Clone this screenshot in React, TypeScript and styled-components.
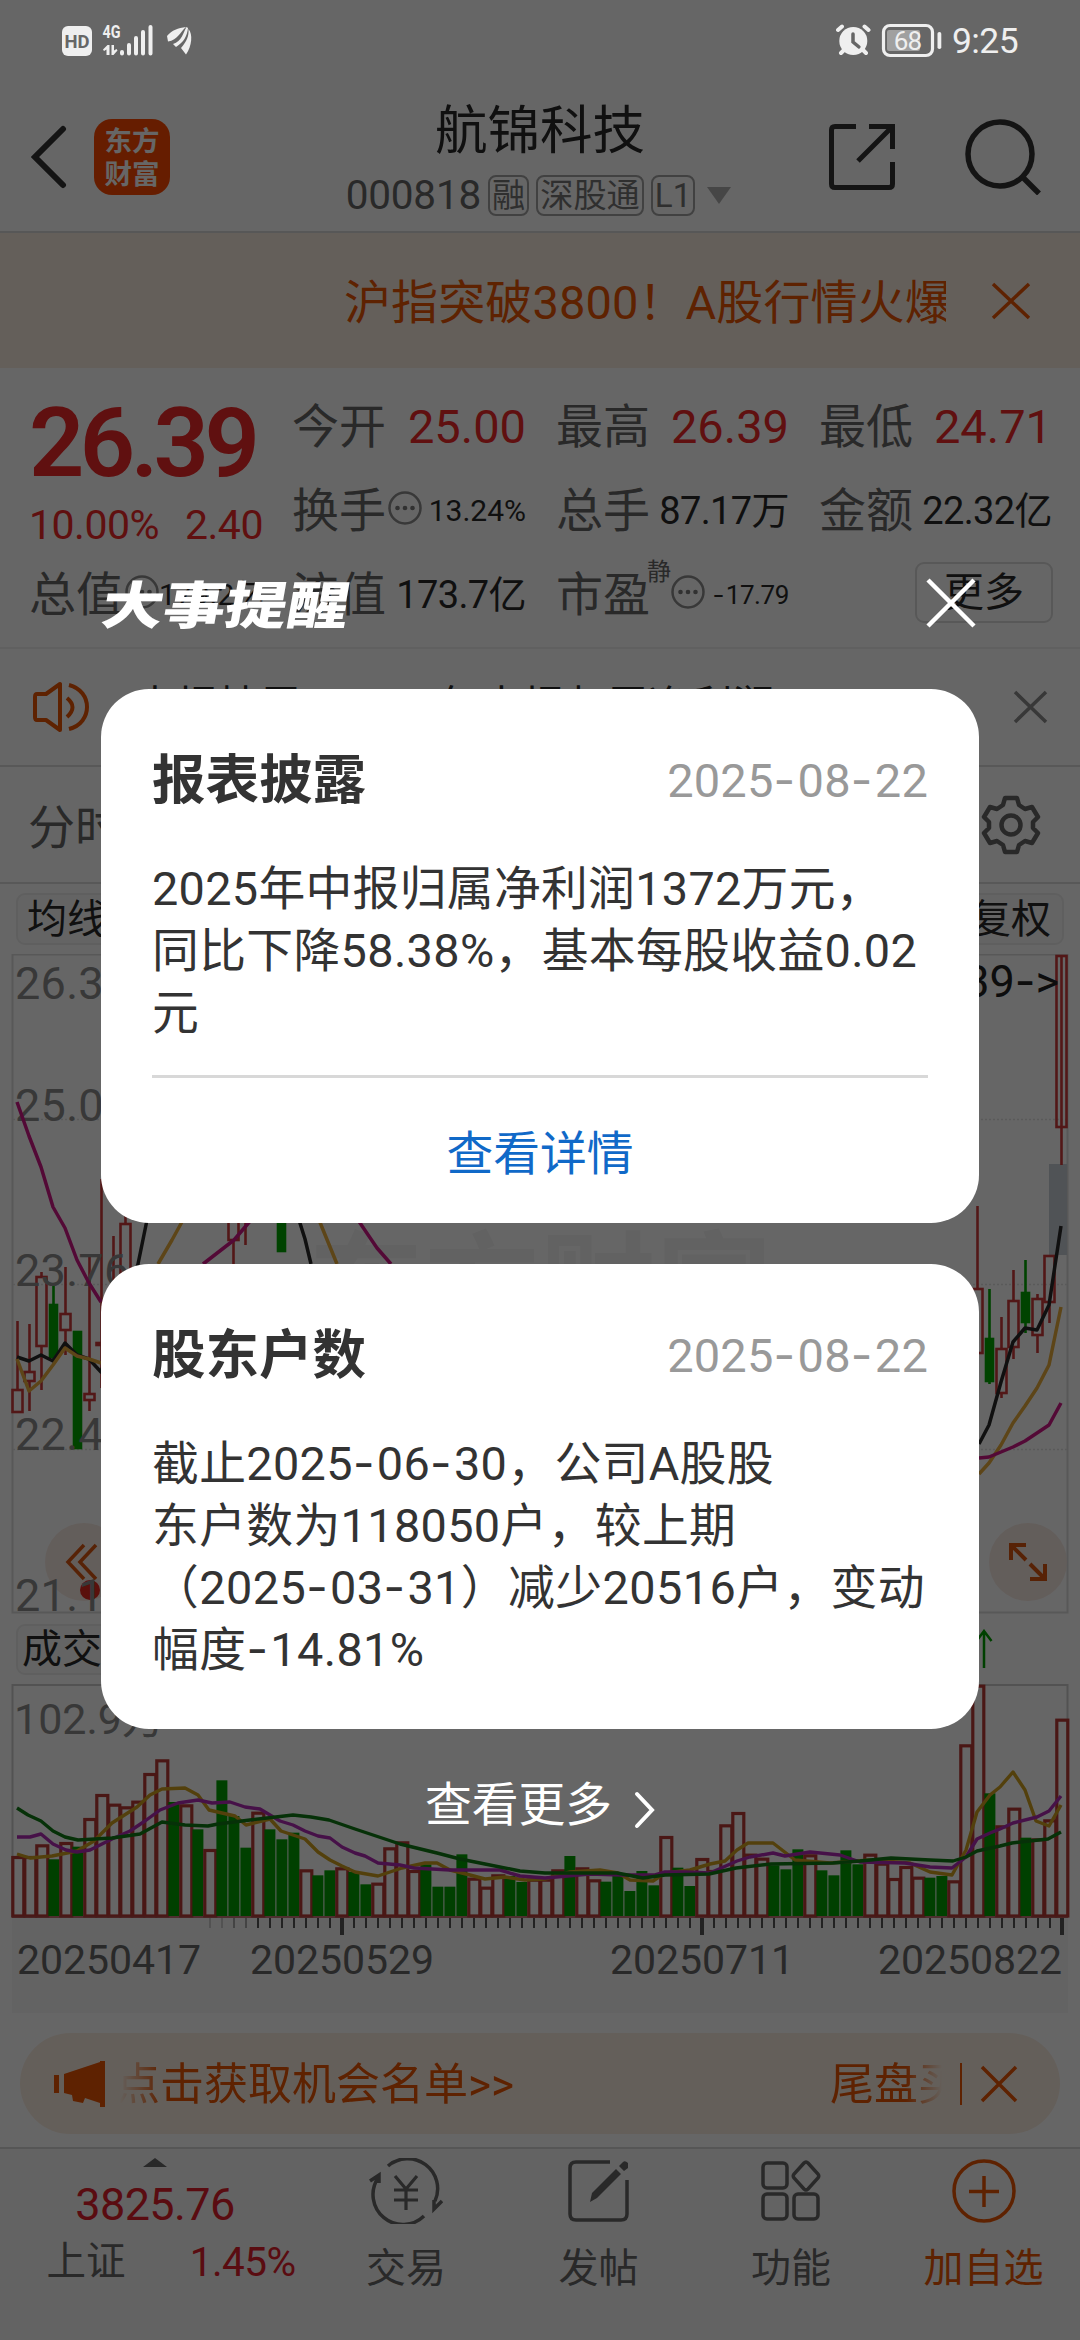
import React from "react";
import styled, { createGlobalStyle } from "styled-components";

const FONT = `Roboto, "Noto Sans CJK SC", sans-serif`;

const Global = createGlobalStyle`
  html, body { margin: 0; padding: 0; background: #666; }
  body { font-family: ${FONT}; color: #333; }
  * { box-sizing: border-box; }
  svg { display: block; flex: none; }
`;

/* ---------- shared ---------- */
const Screen = styled.div`
  position: relative;
  width: 1080px;
  height: 2340px;
  overflow: hidden;
  background: #fff;
`;
const Page = styled.div`
  display: flex;
  flex-direction: column;
  height: 100%;
`;
const Label = styled.span<{ size?: number; color?: string; sp?: number; weight?: number }>`
  font-size: ${(p) => p.size ?? 47}px;
  line-height: 44px;
  height: 44px;
  color: ${(p) => p.color ?? "#666"};
  letter-spacing: ${(p) => p.sp ?? 0}px;
  font-weight: ${(p) => p.weight ?? 400};
  white-space: nowrap;
`;
const Hyphen = styled.span`
  font-family: Inter, sans-serif;
  line-height: 0;
  letter-spacing: 0.05em;
`;
const Text = ({ children }: { children: string }) => (
  <>
    {children.split("-").map((part, i) => (
      <React.Fragment key={i}>
        {i > 0 && <Hyphen>-</Hyphen>}
        {part}
      </React.Fragment>
    ))}
  </>
);
const Cross = ({ w, h, color, stroke }: { w: number; h: number; color: string; stroke: number }) => (
  <svg width={w} height={h} viewBox={`0 0 ${w} ${h}`} stroke={color} strokeWidth={stroke} fill="none">
    <path d={`M2 2L${w - 2} ${h - 2}M${w - 2} 2L2 ${h - 2}`} />
  </svg>
);

/* ---------- status bar ---------- */
const StatusBar = styled.div`
  position: relative;
  z-index: 3;
  height: 80px;
  padding: 0 62px;
  display: flex;
  justify-content: space-between;
  color: #efefef;
`;
const Clock = styled.span`
  font-size: 35.5px;
  line-height: 82px;
  margin-left: 10px;
  letter-spacing: -0.6px;
`;
const StatusSide = styled.div`
  display: flex;
`;

/* ---------- header ---------- */
const Header = styled.header`
  height: 153px;
  border-bottom: 2px solid #dadada;
  display: grid;
  grid-template-columns: 290px 500px 290px;
`;
const HeaderSide = styled.div<{ end?: boolean }>`
  display: flex;
  align-items: center;
  justify-content: ${(p) => (p.end ? "flex-end" : "flex-start")};
  padding: ${(p) => (p.end ? "2px 39px 0 0" : "3px 0 0 31px")};
  gap: ${(p) => (p.end ? 70 : 27)}px;
`;
const Logo = styled.div`
  width: 76px;
  height: 76px;
  border-radius: 18px;
  background: #ff4a00;
  color: #fff;
  font: 700 27.5px/33px "Noto Sans CJK SC", sans-serif;
  text-align: center;
  padding-top: 4px;
`;
const HeaderCenter = styled.div`
  display: flex;
  flex-direction: column;
  align-items: center;
`;
const StockName = styled.h1`
  margin: 21px 0 12px;
  font-size: 52.5px;
  line-height: 60px;
  font-weight: 400;
  color: #2a2a2a;
`;
const CodeRow = styled.div`
  display: flex;
  align-items: center;
  height: 44px;
  margin-left: -3px;
`;
const Tag = styled.span`
  height: 41px;
  margin-left: 7px;
  padding: 0 2px;
  border: 2px solid #a2a2a2;
  border-radius: 8px;
  font-size: 33.2px;
  line-height: 38px;
  color: #777;
`;

/* ---------- banner ---------- */
const Banner = styled.div`
  height: 135px;
  padding-left: 344px;
  background: #fbeee2;
  display: flex;
  align-items: center;
`;
const BannerText = styled.div`
  width: 602px;
  margin: 4px 45px 0 0;
  overflow: hidden;
  white-space: nowrap;
  font-size: 47px;
  line-height: 64px;
  letter-spacing: 0.1px;
  color: #ea5504;
`;

/* ---------- quote ---------- */
const Quote = styled.section`
  height: 281px;
  padding: 17px 0 0 29px;
  border-bottom: 2px solid #efefef;
  display: grid;
  grid-template-columns: 233px 234px 233px 233px;
  column-gap: 30px;
  grid-template-rows: 84px 84px 84px;
`;
const PriceBlock = styled.div`
  grid-row: span 2;
  padding-top: 16px;
`;
const Price = styled.div`
  font-size: 97px;
  line-height: 84px;
  font-weight: 600;
  letter-spacing: -4.6px;
  color: #f02828;
`;
const Change = styled.div`
  margin-top: 20px;
  display: flex;
  gap: 26px;
  font-size: 41px;
  line-height: 40px;
  letter-spacing: -0.5px;
  color: #f02828;
`;
const Cell = styled.div`
  display: flex;
  align-items: center;
  white-space: nowrap;
`;
const Value = styled.span<{ size: number; tone?: string; sp?: number }>`
  margin-left: auto;
  font-size: ${(p) => p.size}px;
  line-height: 44px;
  letter-spacing: ${(p) => p.sp ?? 0}px;
  color: ${(p) => p.tone ?? "#2a2a2a"};
`;
const Sup = styled.span`
  font-size: 24px;
  line-height: 30px;
  color: #666;
  margin: -46px 0 0 -3px;
`;
const MoreBox = styled.div`
  width: 138px;
  height: 61px;
  margin: -6px -1px 0 auto;
  border: 2px solid #dcdcdc;
  border-radius: 9px;
  text-align: center;
  font-size: 40px;
  line-height: 58px;
  color: #2a2a2a;
`;
const Info = ({ ml = 2 }: { ml?: number }) => (
  <svg width={34} height={34} viewBox="0 0 34 34" style={{ marginLeft: ml, marginTop: -7 }}>
    <circle cx="17" cy="17" r="15.500" fill="none" stroke="#8c8c8c" strokeWidth="2.500" />
    <g fill="#7a7a7a">
      <circle cx="9.500" cy="17" r="2.300" />
      <circle cx="17" cy="17" r="2.300" />
      <circle cx="24.500" cy="17" r="2.300" />
    </g>
  </svg>
);

/* ---------- news + tabs ---------- */
const Row = styled.div<{ h: number; line?: boolean }>`
  height: ${(p) => p.h}px;
  border-bottom: ${(p) => (p.line ? "2px solid #dcdcdc" : "none")};
  display: flex;
  align-items: center;
`;
const NewsText = styled.div`
  width: 849px;
  margin: 0 30px 0 43px;
  font-size: 42px;
  line-height: 60px;
  white-space: nowrap;
  overflow: hidden;
  color: #2a2a2a;
`;
const TabText = styled.div`
  flex: 1;
  padding: 6px 0 0 28px;
  font-size: 47px;
  line-height: 50px;
  color: #666;
`;
const Chip = styled.div<{ w: number; h: number; right?: boolean; pad?: number }>`
  width: ${(p) => p.w}px;
  height: ${(p) => p.h}px;
  margin: ${(p) => (p.right ? "0 16px 0 auto" : "0 0 0 16px")};
  padding: ${(p) => (p.right ? "0 11px 0 0" : `0 0 0 ${p.pad ?? 9}px`)};
  border: 2px solid #eee;
  border-radius: 9px;
  background: #fbfbfb;
  text-align: ${(p) => (p.right ? "right" : "left")};
  font-size: 40px;
  line-height: ${(p) => p.h - 3}px;
  color: #2a2a2a;
`;

/* ---------- ticker ---------- */
const Pill = styled.div`
  height: 101px;
  margin: 20px 20px 13px 20px;
  padding-left: 34px;
  border-radius: 51px;
  background: #fbeee2;
  color: #ea5504;
  display: flex;
  align-items: center;
`;
const Ticker = styled.div`
  width: 827px;
  margin: 2px 0 0 11px;
  display: flex;
  justify-content: space-between;
  overflow: hidden;
  white-space: nowrap;
  font-size: 44px;
  line-height: 70px;
  mask-image: linear-gradient(90deg, transparent 4px, #000 46px, #000 790px, transparent 826px);
`;
const TickerNext = styled.span`
  width: 113px;
`;
const Divider = styled.i`
  width: 2px;
  height: 42px;
  margin: 0 18px 0 17px;
  background: #ea5504;
`;

/* ---------- bottom bar ---------- */
const BottomBar = styled.nav`
  height: 193px;
  border-top: 2px solid #d8d8d8;
  background: #f8f8f8;
  display: grid;
  grid-template-columns: 310px 192px 193px 192px 193px;
`;
const IndexCell = styled.div`
  display: flex;
  flex-direction: column;
  align-items: center;
  padding-top: 9px;
`;
const IndexValue = styled.div`
  margin-top: 15px;
  font-size: 45px;
  line-height: 46px;
  letter-spacing: -0.6px;
  color: #e0202c;
`;
const IndexRow = styled.div`
  width: 249px;
  margin: 12px 0 0 32px;
  display: flex;
  justify-content: space-between;
  align-items: center;
`;
const NavItem = styled.div<{ accent?: boolean }>`
  display: flex;
  flex-direction: column;
  align-items: center;
  padding-top: 9px;
  font-size: 40px;
  line-height: 56px;
  color: ${(p) => (p.accent ? "#ea5504" : "#666")};
  svg { margin-bottom: 17px; }
`;

/* ---------- modal ---------- */
const Overlay = styled.div`
  position: absolute;
  inset: 0;
  z-index: 2;
  padding: 573px 101px 0;
  background: rgba(0, 0, 0, 0.6);
`;
const ModalHead = styled.div`
  height: 60px;
  margin-bottom: 56px;
  padding: 0 3px 0 1px;
  display: flex;
  justify-content: space-between;
  align-items: center;
`;
const ModalTitle = styled.h2`
  margin: -2px 0 0;
  font: 900 51px/60px "Noto Sans CJK SC", sans-serif;
  color: #fff;
  transform: skewX(-10deg) scaleX(1.21);
  transform-origin: 0 60%;
`;
const Card = styled.article<{ h: number }>`
  height: ${(p) => p.h}px;
  margin-bottom: 41px;
  padding: 62px 51px 0;
  border-radius: 48px;
  background: #fff;
`;
const CardHead = styled.div`
  height: 60px;
  margin-bottom: 47px;
  display: flex;
  justify-content: space-between;
  align-items: center;
`;
const CardBody = styled.div`
  font-size: 46.8px;
  line-height: 62px;
  color: #333;
`;
const Line = styled.div<{ sp?: number }>`
  white-space: nowrap;
  letter-spacing: ${(p) => p.sp ?? 0}px;
`;
const CardLink = styled.div`
  margin-top: 31px;
  border-top: 3px solid #d8d8d8;
  text-align: center;
  font-size: 46.8px;
  line-height: 153px;
  color: #1069c8;
`;
const MoreLink = styled.div`
  margin-top: 5px;
  padding-top: 4px;
  display: flex;
  justify-content: center;
  gap: 22px;
  font-size: 46.8px;
  line-height: 62px;
  color: #fff;
  svg { margin-top: 17px; }
`;

/* ---------- price chart ---------- */
const RED = "#cc3a3a";
const GREEN = "#00a800";
type Candle = [number, "r" | "g", number, number, number, number];
// index, direction, body top, body bottom, wick top, wick bottom
const candles: Candle[] = [
  [0, "r", 1389, 1413, 1321, 1389],
  [1, "r", 1371, 1382, 1324, 1411],
  [2, "r", 1276, 1347, 1272, 1390],
  [3, "g", 1304, 1358, 1286, 1361],
  [4, "r", 1313, 1331, 1267, 1355],
  [5, "g", 1331, 1449, 1331, 1449],
  [6, "r", 1393, 1401, 1257, 1411],
  [7, "r", 1342, 1346, 1179, 1388],
  [8, "r", 1290, 1330, 1236, 1340],
  [9, "r", 1223, 1290, 1216, 1300],
  [18, "r", 1200, 1241, 1190, 1300],
  [19, "r", 1180, 1222, 1180, 1245],
  [22, "g", 1180, 1252, 1180, 1252],
  [80, "r", 1288, 1354, 1206, 1354],
  [81, "g", 1338, 1382, 1289, 1384],
  [82, "r", 1348, 1394, 1317, 1398],
  [83, "r", 1300, 1348, 1270, 1359],
  [84, "g", 1292, 1323, 1260, 1333],
  [85, "r", 1298, 1336, 1294, 1353],
  [86, "r", 1255, 1303, 1255, 1323],
  [87, "r", 955, 1128, 1128, 1165],
];
const cx = (i: number) => 17.5 + i * 12;

const PriceChart = () => (
  <svg width="1080" height="660" viewBox="0 954 1080 660" fontFamily={FONT}>
    <rect x="12.500" y="954.500" width="1055" height="658" fill="none" stroke="#dcdcdc" strokeWidth="2" />
    <path d="M13 1119.500H1067M13 1284.500H1067M13 1449.500H1067" stroke="#e2e2e2" strokeWidth="1.500" strokeDasharray="2 2" />
    <text x="540" y="1329" fontSize="116" fontWeight="700" textAnchor="middle" fill="#f5f5f5">东方财富</text>
    <rect x="1049" y="1164" width="18" height="91" fill="#c9d0d8" />
    {candles.map(([i, d, t, b, wt, wb]) => {
      const x = cx(i);
      const c = d === "r" ? RED : GREEN;
      return (
        <g key={i} stroke={c} strokeWidth="2.600" fill="none">
          <path d={`M${x} ${wt}V${Math.min(t, wb)}M${x} ${b}V${Math.max(wb, b)}`} />
          <rect x={x - (d === "r" ? 5 : 3.5)} y={t + 1} width={d === "r" ? 10 : 7} height={b - t - 2} fill={d === "r" ? "none" : c} />
        </g>
      );
    })}
    <circle cx="84" cy="1562" r="39" fill="#f5e3d9" fillOpacity="0.750" />
    <circle cx="90" cy="1590" r="10" fill="#e02820" />
    <circle cx="1028" cy="1562" r="39" fill="#f5e3d9" fillOpacity="0.750" />
    <g fontSize="45" fill="#8c8c8c" letterSpacing="0.300">
      <text x="15" y="999">26.39</text>
      <text x="15" y="1121">25.08</text>
      <text x="15" y="1286">23.76</text>
      <text x="15" y="1450">22.45</text>
      <text x="15" y="1611">21.13</text>
    </g>
    <text x="1059" y="997" fontSize="45" textAnchor="end" fill="#222">
      26.39<tspan fontFamily="Inter">-</tspan>&gt;
    </text>
    <g fill="none" strokeWidth="3.500" strokeLinejoin="round">
      <path stroke="#2a2a2a" d="M17 1357L29 1361L41 1355L53 1361L65 1343L77 1355L89 1359L101 1372L138 1264L147 1220M299 1220L305 1239L311 1264M979 1444L989 1425L1001 1382L1013 1342L1025 1328L1037 1330L1049 1305L1061 1226" />
      <path stroke="#e8ac3c" d="M17 1359L29 1391L41 1381L53 1365L65 1348L77 1356L89 1359L101 1363M158 1264L172 1240L183 1220M319 1220L337 1264M979 1474L989 1463L1001 1445L1013 1423L1025 1406L1037 1388L1049 1365L1061 1307" />
      <path stroke="#d01888" d="M17 1102L29 1136L41 1167L53 1207L65 1228L77 1260L89 1283L101 1302M203 1264L234 1240L251 1220M358 1220L377 1248L391 1264M979 1458L989 1457L1001 1452L1013 1447L1025 1441L1037 1433L1049 1425L1061 1403" />
    </g>
    <g fill="none" stroke="#d9560f" strokeWidth="3.500">
      <path d="M84 1545L68 1562L84 1579M96 1545L80 1562L96 1579" />
      <path strokeWidth="4" d="M1011 1560V1545H1026M1011 1545L1026 1560M1030 1579H1045V1564M1045 1579L1030 1564" />
    </g>
  </svg>
);

/* ---------- volume chart ---------- */
// letter is the direction, number is the bar height in thirds of a pixel
const volume =
  "r180 r180 r215 g170 r222 g208 r294 r366 r337 r329 r346 r429 r470 g342 r335 g260 r201 g407 g300 g205 r313 g260 g230 g250 r140 g122 g137 r146 g132 g95 r100 r206 r224 r138 g155 g88 g88 g185 r115 r88 r125 g120 g102 r112 r112 r140 g180 r146 r110 g103 g120 g75 g135 g92 r240 g145 g90 r174 r138 r275 r312 r187 r175 g152 g140 g200 r185 g137 g122 g197 g155 r187 r160 r114 r150 r118 g115 g120 r107 r515 r694 g368 r272 r325 g235 r233 r290 r592"
    .split(" ")
    .map((s) => ({ up: s[0] === "r", h: Number(s.slice(1)) / 3 }));

const VolumeChart = () => (
  <svg width="1080" height="329" viewBox="0 1684 1080 329" fontFamily={FONT}>
    <rect x="12" y="1918" width="1056" height="95" fill="#f7f7f7" />
    <path d="M12.500 1917V1685H1067.500V1917" fill="none" stroke="#cdcdcd" strokeWidth="2" />
    <text x="14" y="1734" fontSize="43" fill="#8c8c8c">102.9万</text>
    {volume.map(({ up, h }, i) => {
      const x = 18 + i * 12;
      return up ? (
        <rect key={i} x={x - 5.2} y={1917.5 - h} width="11" height={h - 1.5} fill="none" stroke="#b83a36" strokeWidth="3.200" />
      ) : (
        <rect key={i} x={x - 5.6} y={1916 - h} width="11" height={h} fill="#00a000" />
      );
    })}
    <path d="M12 1917H1068" stroke="#b04a48" strokeWidth="1.500" />
    <g fill="none" strokeWidth="3.400" strokeLinejoin="round">
      <path transform="translate(0 -5)" stroke="#d0a020" d="M17 1859L30 1863L52 1861L77 1856L94 1846L112 1828L137 1812L150 1800L162 1794L185 1793L198 1800L209 1815L235 1821L246 1830L270 1824L281 1836L305 1844L318 1857L330 1865L342 1871L355 1877L378 1881L402 1873L425 1868L437 1868L450 1875L470 1880L485 1884L505 1882L525 1885L545 1884L570 1877L600 1875L618 1878L630 1885L653 1886L665 1878L690 1875L710 1869L725 1866L737 1855L748 1848L773 1848L795 1865L830 1868L870 1865L910 1868L930 1877L952 1880L966 1855L977 1817L990 1800L1000 1792L1013 1777L1025 1795L1036 1826L1049 1831L1061 1810" />
      <path transform="translate(0 -5)" stroke="#b02cb4" d="M17 1842L30 1842L41 1839L53 1849L66 1855L77 1857L90 1855L112 1844L130 1836L145 1826L160 1815L178 1808L198 1805L212 1808L230 1807L245 1812L260 1814L280 1826L293 1830L305 1836L318 1841L330 1843L342 1852L355 1858L365 1861L378 1868L400 1870L414 1873L450 1875L500 1875L520 1881L545 1883L590 1879L620 1880L655 1880L665 1877L685 1877L710 1878L737 1866L750 1862L773 1858L785 1861L810 1857L840 1860L860 1867L905 1868L930 1872L952 1873L966 1862L977 1844L990 1838L1000 1834L1013 1828L1037 1822L1049 1816L1061 1801" />
      <path stroke="#107a14" d="M17 1808L28 1815L41 1821L53 1831L65 1837L78 1840L112 1838L140 1834L162 1822L185 1825L208 1826L218 1824L250 1820L293 1815L311 1817L329 1820L355 1829L400 1844L437 1853L460 1859L485 1864L520 1871L545 1873L617 1873L643 1878L665 1875L709 1874L736 1868L771 1864L833 1863L860 1861L891 1858L930 1860L953 1861L966 1857L977 1851L1000 1846L1012 1843L1048 1839L1061 1832" />
    </g>
    <path
      stroke="#555"
      strokeWidth="2"
      d={Array.from({ length: 68 }, (_, k) => `M${258 + k * 12} 1918V1928`).join("")}
    />
    <path stroke="#aaa" strokeWidth="2" d="M234 1918V1928M246 1918V1928" />
    <path stroke="#ccc" strokeWidth="2" d="M210 1918V1928M222 1918V1928" />
    <path stroke="#555" strokeWidth="4" d="M342 1918V1935M702 1918V1935M1062 1918V1935" />
    <g fontSize="41" fill="#666" letterSpacing="-0.050">
      <text x="17" y="1974">20250417</text>
      <text x="250" y="1974">20250529</text>
      <text x="610" y="1974">20250711</text>
      <text x="878" y="1974">20250822</text>
    </g>
  </svg>
);

export default function App() {
  return (
    <Screen>
      <Global />
      <Page>
        <StatusBar>
          <StatusSide>
            <svg width="140" height="80" viewBox="62 0 140 80" fill="#efefef">
              <rect x="62" y="26" width="30" height="30" rx="6" />
              <text x="77" y="47.500" fontSize="18.500" fontWeight="700" textAnchor="middle" fill="#666" fontFamily={FONT}>HD</text>
              <text x="102.500" y="38" fontSize="18" fontWeight="700" fontFamily={FONT} textLength="18" lengthAdjust="spacingAndGlyphs">4G</text>
              <path d="M103 49.500L107.500 45H109.500V55H106.500V49.500L104 51ZM111.500 45H114V50.500L116.500 49L117.500 50.500L113.500 55H111.500Z" />
              <g stroke="#efefef" strokeWidth="4" strokeLinecap="round">
                <path d="M122 52V53.500M129 45V53.500M136 38V53.500M143 32V53.500M150.500 27V53.500" />
              </g>
              <path d="M167 36C172 30 178 28 186 27C180 32 178 40 168 41.500ZM173 44C182 41 183 33 186.500 27L188 28C187 36 184 42 176 47ZM181 48C187 41 189 36 188.500 29C193 34 192 46 186 54.500Z" />
            </svg>
          </StatusSide>
          <StatusSide>
            <svg width="106" height="80" viewBox="835 0 106 80" fill="#efefef">
              <circle cx="852.300" cy="41" r="14" />
              <path d="M852 34V42L858 47" stroke="#666" strokeWidth="3.500" fill="none" strokeLinecap="round" />
              <path d="M837 30L841 26.500M867.500 30L863.500 26.500M840 53L844 49M865 53L861 49" stroke="#efefef" strokeWidth="4" strokeLinecap="round" />
              <rect x="882.500" y="25.500" width="49" height="30" rx="6.500" fill="none" stroke="#efefef" strokeWidth="3.200" />
              <rect x="886" y="30" width="33" height="21" rx="2" fill="#a0a0a0" />
              <rect x="936.500" y="32" width="3.800" height="17" rx="1.800" />
              <text x="906.500" y="50" fontSize="26" textAnchor="middle" fontFamily={FONT} letterSpacing="-0.800">68</text>
            </svg>
            <Clock>9:25</Clock>
          </StatusSide>
        </StatusBar>

        <Header>
          <HeaderSide>
            <svg width="36" height="64" viewBox="0 0 36 64" fill="none" stroke="#333" strokeWidth="6" strokeLinecap="round">
              <path d="M32 4L4 32L32 60" />
            </svg>
            <Logo>东方<br />财富</Logo>
          </HeaderSide>
          <HeaderCenter>
            <StockName>航锦科技</StockName>
            <CodeRow>
              <Label size={40.5} sp={-0.2}>000818</Label>
              <Tag>融</Tag>
              <Tag>深股通</Tag>
              <Tag>L1</Tag>
              <svg width="24" height="17" viewBox="0 0 24 17" style={{ marginLeft: 12 }}>
                <path d="M0 0H24L12 17Z" fill="#b0b0b0" />
              </svg>
            </CodeRow>
          </HeaderCenter>
          <HeaderSide end>
            <svg width="66" height="66" viewBox="0 0 66 66" fill="none" stroke="#333" strokeWidth="5">
              <path d="M27 2.500H6Q2.500 2.500 2.500 6V60Q2.500 63.500 6 63.500H60Q63.500 63.500 63.500 60V38M40 2.500H63.500V25M63 3L29 37" />
            </svg>
            <svg width="76" height="76" viewBox="0 0 76 76" fill="none" stroke="#333" strokeWidth="5.500">
              <circle cx="35" cy="35" r="32" />
              <path d="M57.500 58L74 74.500" />
            </svg>
          </HeaderSide>
        </Header>

        <Banner>
          <BannerText>沪指突破3800！A股行情火爆</BannerText>
          <Cross w={40} h={38} color="#ea5504" stroke={3.5} />
        </Banner>

        <Quote>
          <PriceBlock>
            <Price>26.39</Price>
            <Change><span>10.00%</span><span>2.40</span></Change>
          </PriceBlock>
          <Cell><Label>今开</Label><Value size={47} tone="#f02828">25.00</Value></Cell>
          <Cell><Label>最高</Label><Value size={47} tone="#f02828">26.39</Value></Cell>
          <Cell><Label>最低</Label><Value size={47} tone="#f02828">24.71</Value></Cell>
          <Cell><Label>换手</Label><Info /><Value size={30}>13.24%</Value></Cell>
          <Cell><Label>总手</Label><Value size={38} sp={-0.6}>87.17万</Value></Cell>
          <Cell><Label>金额</Label><Value size={38} sp={-0.6}>22.32亿</Value></Cell>
          <Cell><Label>总值</Label><Info /><Value size={30}>179.2亿</Value></Cell>
          <Cell><Label>流值</Label><Value size={38} sp={-0.6}>173.7亿</Value></Cell>
          <Cell><Label>市盈</Label><Sup>静</Sup><Info ml={0} /><Value size={26} sp={-0.4}><Text>-17.79</Text></Value></Cell>
          <Cell><MoreBox>更多</MoreBox></Cell>
        </Quote>

        <Row h={118} line>
          <svg width="58" height="52" viewBox="0 0 58 52" fill="none" stroke="#ea5504" strokeWidth="4" strokeLinejoin="round" style={{ marginLeft: 33 }}>
            <path d="M4 13H13L27 3V49L13 39H4Q2 39 2 36V16Q2 13 4 13ZM34 17Q45 26 34 36M36 4C60 10 60 42 36 48" />
          </svg>
          <NewsText>中报披露：2025年中报归属净利润</NewsText>
          <Cross w={35} h={34} color="#8c8c8c" stroke={3.5} />
        </Row>
        <Row h={117} line>
          <TabText>分时</TabText>
          <svg width="60" height="60" viewBox="0 0 60 60" fill="none" stroke="#666" strokeWidth="4.500" strokeLinejoin="round" style={{ marginRight: 39 }}>
            <path d="M24 3H36L38 10L44 14L51 12L57 22L52 27V33L57 38L51 48L44 46L38 50L36 57H24L22 50L16 46L9 48L3 38L8 33V27L3 22L9 12L16 14L22 10Z" />
            <circle cx="30" cy="30" r="9.500" />
          </svg>
        </Row>
        <Row h={70}>
          <Chip w={150} h={52}>均线</Chip>
          <Chip w={150} h={52} right>前复权</Chip>
        </Row>
        <PriceChart />
        <Row h={70}>
          <Chip w={170} h={51} pad={4}>成交量</Chip>
          <svg width="18" height="40" viewBox="0 0 18 40" fill="none" stroke="#00a000" strokeWidth="2.500" style={{ margin: "0 87px 0 auto" }}>
            <path d="M9 39V2M1.500 12L9 2L16.500 12" />
          </svg>
        </Row>
        <VolumeChart />

        <Pill>
          <svg width="51" height="46" viewBox="0 0 51 46" fill="#ea5504">
            <path d="M0 14H5V32H0ZM10 13L46 1V0H51V46H46V42L31 37L29 42L19 40L18 34L10 32Z" />
          </svg>
          <Ticker>
            <span>点击获取机会名单&gt;&gt;</span>
            <TickerNext>尾盘买</TickerNext>
          </Ticker>
          <Divider />
          <Cross w={38} h={38} color="#ea5504" stroke={3.5} />
        </Pill>

        <BottomBar>
          <IndexCell>
            <svg width="24" height="9" viewBox="0 0 24 9"><path d="M0 9L12 0L24 9Z" fill="#666" /></svg>
            <IndexValue>3825.76</IndexValue>
            <IndexRow>
              <Label size={39.5}>上证</Label>
              <Label size={40.5} color="#e0202c" sp={-0.6}>1.45%</Label>
            </IndexRow>
          </IndexCell>
          <NavItem>
            <svg width="74" height="66" viewBox="0 0 74 66" fill="none" stroke="#666" strokeWidth="3.500">
              <path d="M19 8A30 30 0 0 1 66 43M55 58A30 30 0 0 1 9 20M1 23L10 17V25M73 43L65 51V42" />
              <path d="M26 18L37 31L48 18M25 32H49M25 42H49M37 31V52" strokeWidth="3.200" />
            </svg>
            交易
          </NavItem>
          <NavItem>
            <svg width="62" height="66" viewBox="0 0 62 66" fill="none" stroke="#666" strokeWidth="3.500">
              <path d="M42 4H8Q2 4 2 10V56Q2 62 8 62H53Q59 62 59 56V22" />
              <path d="M22 44L24 35L48 11L53 16L29 40ZM51 8L55 4Q57 2 60 5V10L56 13Z" fill="#666" stroke="none" />
            </svg>
            发帖
          </NavItem>
          <NavItem>
            <svg width="60" height="66" viewBox="0 0 60 66" fill="none" stroke="#666" strokeWidth="3.500">
              <rect x="2" y="5" width="24" height="25" rx="4" />
              <rect x="2" y="36" width="24" height="25" rx="4" />
              <rect x="33" y="36" width="24" height="25" rx="4" />
              <path d="M43 5Q45 3 47 5L57 16Q58.500 18 57 20L47 31Q45 33 43 31L33 20Q31.500 18 33 16Z" />
            </svg>
            功能
          </NavItem>
          <NavItem accent>
            <svg width="66" height="66" viewBox="0 0 66 66" fill="none" stroke="#ea5504" strokeWidth="3.500">
              <circle cx="33" cy="33" r="30" />
              <path d="M33 18V49M18 33.500H48" />
            </svg>
            加自选
          </NavItem>
        </BottomBar>
      </Page>

      <Overlay>
        <ModalHead>
          <ModalTitle>大事提醒</ModalTitle>
          <Cross w={50} h={50} color="#fff" stroke={4.5} />
        </ModalHead>
        <Card h={534}>
          <CardHead>
            <Label size={53.5} color="#333" weight={700}>报表披露</Label>
            <Label color="#999" sp={0.2}><Text>2025-08-22</Text></Label>
          </CardHead>
          <CardBody>
            <Line sp={0.3}>2025年中报归属净利润1372万元，</Line>
            <Line sp={0.35}>同比下降58.38%，基本每股收益0.02</Line>
            <Line>元</Line>
          </CardBody>
          <CardLink>查看详情</CardLink>
        </Card>
        <Card h={465}>
          <CardHead>
            <Label size={53.5} color="#333" weight={700}>股东户数</Label>
            <Label color="#999" sp={0.2}><Text>2025-08-22</Text></Label>
          </CardHead>
          <CardBody>
            <Line sp={0.35}><Text>截止2025-06-30，公司A股股</Text></Line>
            <Line sp={0.35}>东户数为118050户，较上期</Line>
            <Line sp={0.43}><Text>（2025-03-31）减少20516户，变动</Text></Line>
            <Line sp={0.4}><Text>幅度-14.81%</Text></Line>
          </CardBody>
        </Card>
        <MoreLink>
          查看更多
          <svg width="21" height="38" viewBox="0 0 21 38" fill="none" stroke="#fff" strokeWidth="4" strokeLinecap="round">
            <path d="M3 3L18 19L3 35" />
          </svg>
        </MoreLink>
      </Overlay>
    </Screen>
  );
}
